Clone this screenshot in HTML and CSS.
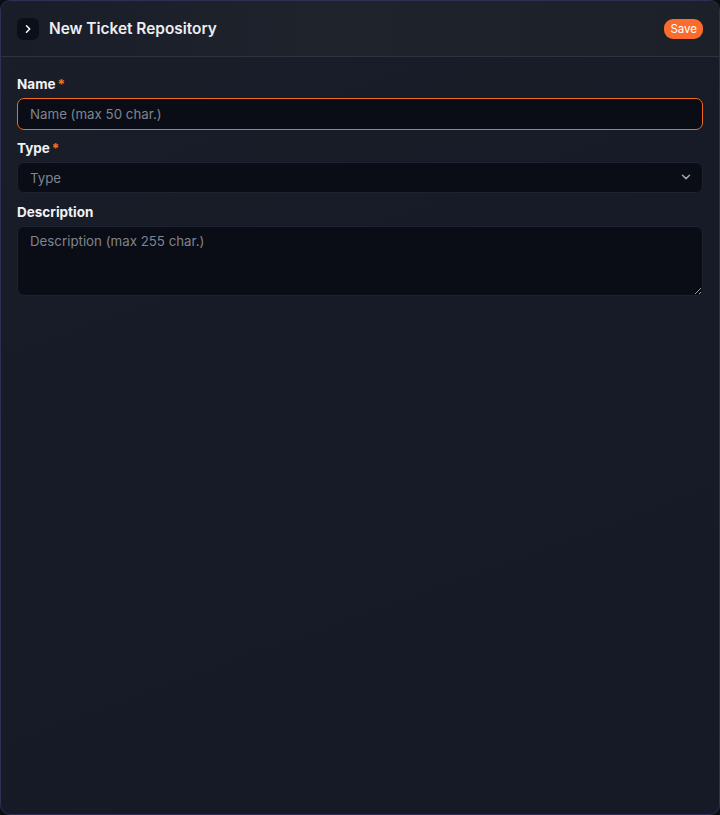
FILE: index.html
```html
<!DOCTYPE html>
<html lang="en">
<head>
	<meta charset="utf-8">
	<title>New Ticket Repository</title>
	<link rel="stylesheet" href="styles.css">
</head>
<body>
	<div class="panel">
		<header class="panel-head">
			<button class="collapse-btn" aria-label="Close">
				<svg width="10" height="10" viewBox="0 0 10 10"><path d="M3.5 1.8 L6.7 5 L3.5 8.2" fill="none" stroke="#f3f4f6" stroke-width="1.6" stroke-linecap="round" stroke-linejoin="round"/></svg>
			</button>
			<h1>New Ticket Repository</h1>
			<button class="save-btn">Save</button>
		</header>
		<form class="panel-body">
			<label for="name">Name<span class="req">*</span></label>
			<input type="text" id="name" class="field active" placeholder="Name (max 50 char.)">
			<label for="type">Type<span class="req">*</span></label>
			<div class="select-wrap">
				<select id="type" class="field">
					<option value="">Type</option>
				</select>
				<svg class="chevron" width="12" height="12" viewBox="0 0 12 12"><path d="M2.5 4.3 L6 7.6 L9.5 4.3" fill="none" stroke="#9ca3af" stroke-width="1.5" stroke-linecap="round" stroke-linejoin="round"/></svg>
			</div>
			<label for="description">Description</label>
			<textarea id="description" class="field" placeholder="Description (max 255 char.)"></textarea>
		</form>
	</div>
</body>
</html>
```

FILE: styles.css
```css
html, body {
	margin: 0;
	height: 100%;
	background: #0b0d14;
}
body {
	font-family: Inter, "Noto Sans", sans-serif;
	color: #e5e7eb;
}
.panel {
	box-sizing: border-box;
	height: 815px;
	border: 1px solid #2a3152;
	border-radius: 10px;
	background: linear-gradient(160deg, #1a1e29 0%, #161b27 40%, #151a26 100%);
	overflow: hidden;
}
.panel-head {
	display: flex;
	align-items: center;
	height: 55px;
	padding: 0 16px;
	border-bottom: 1px solid #2e3344;
	background: linear-gradient(90deg, #191d28 0%, #1f232c 45%, #1c2029 100%);
}
.collapse-btn {
	display: flex;
	align-items: center;
	justify-content: center;
	width: 22px;
	height: 22px;
	padding: 0;
	border: none;
	border-radius: 6px;
	background: #0b0f17;
}
.panel-head h1 {
	flex: 1;
	margin: 0 0 0 10px;
	font-size: 15.4px;
	font-weight: 600;
	color: #eceef2;
}
.save-btn {
	height: 20px;
	padding: 0 6px;
	border: none;
	border-radius: 9px;
	background: #fb6b2d;
	color: #fff;
	font-family: Inter, sans-serif;
	font-size: 11.5px;
	line-height: 20px;
}
.panel-body {
	display: flex;
	flex-direction: column;
	padding: 17px 16px 0;
}
.panel-body label {
	font-size: 13.5px;
	font-weight: 700;
	line-height: 20px;
	color: #f1f2f5;
	margin-bottom: 4px;
}
.req {
	color: #f97316;
	margin-left: 2px;
}
.field {
	box-sizing: border-box;
	width: 100%;
	border: 1px solid #1e2332;
	border-radius: 7px;
	background: #0a0d15;
	color: #e5e7eb;
	font-family: Inter, sans-serif;
	font-size: 13.3px;
	padding: 0 12px;
	margin-bottom: 8px;
	outline: none;
}
.field::placeholder {
	color: #7f848f;
}
input.field {
	height: 32px;
}
input.active {
	border-color: #f26a22;
}
.select-wrap {
	position: relative;
}
select.field {
	height: 31px;
	margin-bottom: 9px;
	appearance: none;
	color: #7f848f;
}
.chevron {
	position: absolute;
	right: 11px;
	top: 9px;
}
textarea.field {
	height: 70px;
	padding-top: 6px;
	resize: vertical;
}
```
